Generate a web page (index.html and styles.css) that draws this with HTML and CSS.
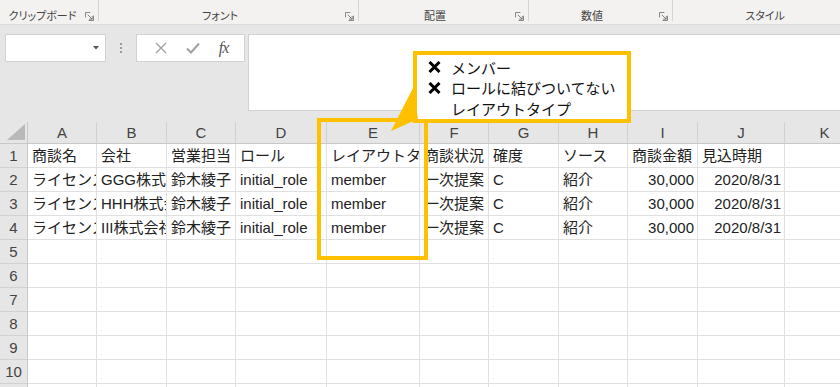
FILE: index.html
```html
<!DOCTYPE html>
<html lang="ja">
<head>
<meta charset="utf-8">
<title>Excel</title>
<link rel="stylesheet" href="styles.css">
</head>
<body>
<div class="page">
  <div class="ribbon">
    <div class="group g-clip"><span class="glabel">クリップボード</span><svg class="launch" viewBox="0 0 10 10"><path d="M0.5 6V0.5H6M4 9.5H9.5V4" fill="none" stroke="#777" stroke-width="1"/><path d="M3 3L8 8M8 4.5V8H4.5" fill="none" stroke="#777" stroke-width="1"/></svg></div>
    <div class="group g-font"><span class="glabel">フォント</span><svg class="launch" viewBox="0 0 10 10"><path d="M0.5 6V0.5H6M4 9.5H9.5V4" fill="none" stroke="#777" stroke-width="1"/><path d="M3 3L8 8M8 4.5V8H4.5" fill="none" stroke="#777" stroke-width="1"/></svg></div>
    <div class="group g-align"><span class="glabel">配置</span><svg class="launch" viewBox="0 0 10 10"><path d="M0.5 6V0.5H6M4 9.5H9.5V4" fill="none" stroke="#777" stroke-width="1"/><path d="M3 3L8 8M8 4.5V8H4.5" fill="none" stroke="#777" stroke-width="1"/></svg></div>
    <div class="group g-num"><span class="glabel">数値</span><svg class="launch" viewBox="0 0 10 10"><path d="M0.5 6V0.5H6M4 9.5H9.5V4" fill="none" stroke="#777" stroke-width="1"/><path d="M3 3L8 8M8 4.5V8H4.5" fill="none" stroke="#777" stroke-width="1"/></svg></div>
    <div class="group g-style"><span class="glabel">スタイル</span></div>
  </div>

  <div class="fbar">
    <div class="namebox"><svg class="dd" viewBox="0 0 6 4"><path d="M0 0H6L3 3.5Z" fill="#555"/></svg></div>
    <div class="dots"><span></span><span></span><span></span></div>
    <div class="fxbox">
      <svg class="fxicon" viewBox="0 0 12 12"><path d="M1 1L11 11M11 1L1 11" stroke="#a0a0a0" stroke-width="1.3" fill="none"/></svg>
      <svg class="fxicon" viewBox="0 0 14 12"><path d="M1 6.5L5 10.5L13 1.5" stroke="#a0a0a0" stroke-width="2" fill="none"/></svg>
      <span class="fx">fx</span>
    </div>
    <div class="finput"></div>
  </div>

  <div class="sheet">
    <div class="corner"><svg viewBox="0 0 18 16"><path d="M18 0V16H0Z" fill="#b9b9b9"/></svg></div>
    <div class="ch">A</div><div class="ch">B</div><div class="ch">C</div><div class="ch">D</div><div class="ch">E</div><div class="ch">F</div><div class="ch">G</div><div class="ch">H</div><div class="ch">I</div><div class="ch">J</div><div class="ch">K</div>

    <div class="rh">1</div><div class="c">商談名</div><div class="c">会社</div><div class="c">営業担当</div><div class="c">ロール</div><div class="c">レイアウトタイプ</div><div class="c">商談状況</div><div class="c">確度</div><div class="c">ソース</div><div class="c">商談金額</div><div class="c">見込時期</div><div class="c"></div>

    <div class="rh">2</div><div class="c">ライセンス販売</div><div class="c">GGG株式会社</div><div class="c">鈴木綾子</div><div class="c">initial_role</div><div class="c">member</div><div class="c">一次提案</div><div class="c">C</div><div class="c">紹介</div><div class="c r">30,000</div><div class="c r">2020/8/31</div><div class="c"></div>

    <div class="rh">3</div><div class="c">ライセンス販売</div><div class="c">HHH株式会社</div><div class="c">鈴木綾子</div><div class="c">initial_role</div><div class="c">member</div><div class="c">一次提案</div><div class="c">C</div><div class="c">紹介</div><div class="c r">30,000</div><div class="c r">2020/8/31</div><div class="c"></div>

    <div class="rh">4</div><div class="c">ライセンス販売</div><div class="c">III株式会社</div><div class="c">鈴木綾子</div><div class="c">initial_role</div><div class="c">member</div><div class="c">一次提案</div><div class="c">C</div><div class="c">紹介</div><div class="c r">30,000</div><div class="c r">2020/8/31</div><div class="c"></div>

    <div class="rh">5</div><div class="c"></div><div class="c"></div><div class="c"></div><div class="c"></div><div class="c"></div><div class="c"></div><div class="c"></div><div class="c"></div><div class="c"></div><div class="c"></div><div class="c"></div>
    <div class="rh">6</div><div class="c"></div><div class="c"></div><div class="c"></div><div class="c"></div><div class="c"></div><div class="c"></div><div class="c"></div><div class="c"></div><div class="c"></div><div class="c"></div><div class="c"></div>
    <div class="rh">7</div><div class="c"></div><div class="c"></div><div class="c"></div><div class="c"></div><div class="c"></div><div class="c"></div><div class="c"></div><div class="c"></div><div class="c"></div><div class="c"></div><div class="c"></div>
    <div class="rh">8</div><div class="c"></div><div class="c"></div><div class="c"></div><div class="c"></div><div class="c"></div><div class="c"></div><div class="c"></div><div class="c"></div><div class="c"></div><div class="c"></div><div class="c"></div>
    <div class="rh">9</div><div class="c"></div><div class="c"></div><div class="c"></div><div class="c"></div><div class="c"></div><div class="c"></div><div class="c"></div><div class="c"></div><div class="c"></div><div class="c"></div><div class="c"></div>
    <div class="rh">10</div><div class="c"></div><div class="c"></div><div class="c"></div><div class="c"></div><div class="c"></div><div class="c"></div><div class="c"></div><div class="c"></div><div class="c"></div><div class="c"></div><div class="c"></div>
    <div class="rh">11</div><div class="c"></div><div class="c"></div><div class="c"></div><div class="c"></div><div class="c"></div><div class="c"></div><div class="c"></div><div class="c"></div><div class="c"></div><div class="c"></div><div class="c"></div>
  </div>

  <div class="highlight"></div>
  <div class="callout">
    <div class="cline"><svg class="xmark" viewBox="0 0 14 12"><path d="M2 1L12 11M12 1L2 11" stroke="#000" stroke-width="3" fill="none"/></svg><span>メンバー</span></div>
    <div class="cline"><svg class="xmark" viewBox="0 0 14 12"><path d="M2 1L12 11M12 1L2 11" stroke="#000" stroke-width="3" fill="none"/></svg><span>ロールに結びついてない</span></div>
    <div class="cline"><span class="xspace"></span><span>レイアウトタイプ</span></div>
  </div>
  <svg class="pointer" viewBox="0 0 30 46"><polygon points="22,0 0,43 27,31" fill="#FFC000"/></svg>
</div>
</body>
</html>
```

FILE: styles.css
```css
* { box-sizing: border-box; }
html, body { margin: 0; padding: 0; }
body {
  width: 840px;
  height: 387px;
  overflow: hidden;
  background: #ffffff;
  font-family: "Noto Sans CJK JP", "Noto Sans", sans-serif;
  color: #222;
}
.page {
  position: relative;
  width: 840px;
  height: 387px;
  overflow: hidden;
}

/* ribbon */
.ribbon {
  display: flex;
  height: 25px;
  background: #f3f2f1;
  border-bottom: 1px solid #dadada;
  width: 900px;
}
.group {
  display: flex;
  align-items: flex-start;
  border-right: 1px solid #d4d4d4;
  height: 21px;
  padding-top: 8px;
}
.g-clip { width: 99px; padding-left: 4px; }
.g-font { width: 260px; }
.g-align { width: 170px; }
.g-num { width: 144px; }
.g-style { width: 184px; border-right: none; }
.glabel {
  flex: 1;
  text-align: center;
  font-size: 11px;
  line-height: 14px;
  color: #444;
  font-feature-settings: "palt";
  white-space: nowrap;
}
.launch {
  width: 9px;
  height: 9px;
  margin-top: 4px;
  margin-right: 4px;
  margin-left: 4px;
}

/* formula bar */
.fbar {
  display: flex;
  align-items: flex-start;
  height: 97px;
  background: #e6e6e6;
  padding: 9px 0 0 5px;
}
.namebox {
  width: 101px;
  height: 28px;
  background: #fff;
  border: 1px solid #d2d2d2;
  display: flex;
  justify-content: flex-end;
  align-items: center;
  padding-right: 6px;
}
.dd { width: 6px; height: 4px; }
.dots {
  width: 30px;
  height: 28px;
  display: flex;
  flex-direction: column;
  align-items: center;
  justify-content: center;
  gap: 2px;
}
.dots span {
  display: block;
  width: 2px;
  height: 2px;
  background: #9b9b9b;
}
.fxbox {
  width: 109px;
  height: 28px;
  background: #fff;
  border: 1px solid #d2d2d2;
  display: flex;
  align-items: center;
  justify-content: space-around;
  padding: 0 6px 0 8px;
}
.fxicon { width: 12px; height: 12px; }
.fxicon + .fxicon { width: 14px; }
.fx {
  font-family: "Liberation Serif", "DejaVu Serif", serif;
  font-style: italic;
  font-size: 16px;
  color: #555;
  letter-spacing: -1px;
}
.finput {
  margin-left: 3px;
  flex: 1;
  height: 77px;
  background: #fff;
  border: 1px solid #d2d2d2;
  border-right: none;
}

/* sheet grid */
.sheet {
  display: grid;
  grid-template-columns: 28px 69px 70px 69px 91px 93px 69px 70px 69px 70px 87px 80px;
  grid-template-rows: 22px repeat(11, 24px);
  font-family: "Liberation Sans", "Noto Sans CJK JP", sans-serif;
}
.corner {
  background: #e6e6e6;
  border-right: 1px solid #c8c8c8;
  border-bottom: 1px solid #c8c8c8;
  display: flex;
  align-items: flex-end;
  justify-content: flex-end;
  padding: 0 2px 3px 0;
}
.corner svg { width: 18px; height: 16px; }
.ch {
  background: #e6e6e6;
  border-right: 1px solid #d1d1d1;
  border-bottom: 1px solid #c8c8c8;
  text-align: center;
  font-size: 15px;
  line-height: 22px;
  color: #444;
}
.rh {
  background: #e6e6e6;
  border-right: 1px solid #c8c8c8;
  border-bottom: 1px solid #d1d1d1;
  text-align: center;
  font-size: 15px;
  line-height: 24px;
  color: #444;
}
.c {
  border-right: 1px solid #e0e0e0;
  border-bottom: 1px solid #e0e0e0;
  font-size: 15px;
  line-height: 24px;
  padding: 0 3px 0 4px;
  white-space: nowrap;
  overflow: hidden;
  color: #222;
}
.c.r { text-align: right; }

/* overlays */
.highlight {
  position: absolute;
  left: 317px;
  top: 118px;
  width: 111px;
  height: 142px;
  border: 4px solid #FFC000;
}
.callout {
  position: absolute;
  left: 413px;
  top: 51px;
  width: 218px;
  height: 72px;
  background: #fff;
  border: 4px solid #FFC000;
  padding: 2px 0 0 10px;
}
.cline {
  display: flex;
  align-items: center;
  height: 20.5px;
  font-size: 15px;
  color: #111;
  white-space: nowrap;
}
.xmark { width: 15px; height: 12px; margin-right: 9px; }
.xspace { display: inline-block; width: 24px; }
.pointer {
  position: absolute;
  left: 391px;
  top: 88px;
  width: 30px;
  height: 46px;
}
```
